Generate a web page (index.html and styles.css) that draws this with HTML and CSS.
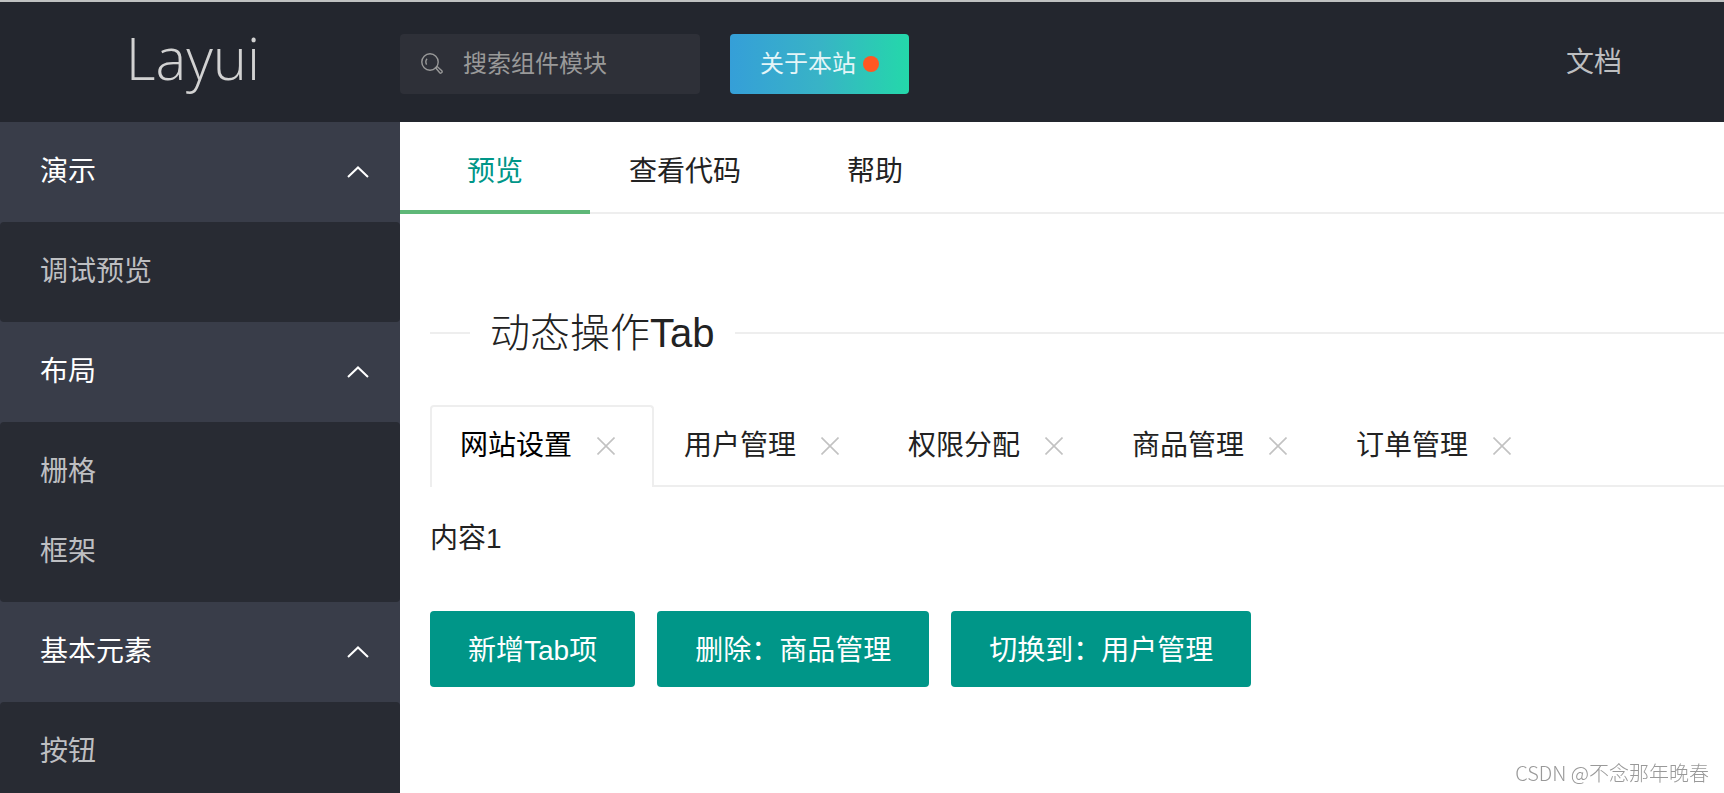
FILE: index.html
```html
<!DOCTYPE html>
<html lang="zh-CN">
<head>
<meta charset="utf-8">
<title>Layui</title>
<link rel="stylesheet" href="styles.css">
</head>
<body>
<header class="header">
  <a class="logo" href="#">Layui</a>
  <label class="search">
    <svg class="search-icon" viewBox="0 0 22 22" aria-hidden="true">
      <circle cx="9" cy="9" r="8.2"/>
      <path d="M5.6 11.6C4.5 9.6 4.6 7.5 6 5.8M14.6 14.8l1.6-1.2 4.6 4.2c1 1.2-.6 3-1.9 2.1z"/>
    </svg>
    <input class="search-input" type="text" placeholder="搜索组件模块" aria-label="搜索组件模块">
  </label>
  <a class="about" href="#">关于本站<span class="dot"></span></a>
  <nav class="header-nav"><a href="#">文档</a></nav>
</header>
<div class="body">
  <nav class="side">
    <button class="side-title" type="button">演示<svg class="chevron" viewBox="0 0 22 12" aria-hidden="true"><path d="M1 11 11 1.5 21 11"/></svg></button>
    <div class="side-group"><a href="#">调试预览</a></div>
    <button class="side-title" type="button">布局<svg class="chevron" viewBox="0 0 22 12" aria-hidden="true"><path d="M1 11 11 1.5 21 11"/></svg></button>
    <div class="side-group"><a href="#">栅格</a><a href="#">框架</a></div>
    <button class="side-title" type="button">基本元素<svg class="chevron" viewBox="0 0 22 12" aria-hidden="true"><path d="M1 11 11 1.5 21 11"/></svg></button>
    <div class="side-group"><a href="#">按钮</a></div>
  </nav>
  <main class="main">
    <div class="view-tabs">
      <button class="view-tab active" type="button">预览</button>
      <button class="view-tab" type="button">查看代码</button>
      <button class="view-tab" type="button">帮助</button>
    </div>
    <section class="content">
      <h1 class="section-title">动态操作Tab</h1>
      <div class="card-tabs">
        <div class="card-tab active"><span>网站设置</span><button class="close" type="button" aria-label="关闭"><svg viewBox="0 0 18 18"><path d="M.5.5l17 17M17.5.5l-17 17"/></svg></button></div>
        <div class="card-tab"><span>用户管理</span><button class="close" type="button" aria-label="关闭"><svg viewBox="0 0 18 18"><path d="M.5.5l17 17M17.5.5l-17 17"/></svg></button></div>
        <div class="card-tab"><span>权限分配</span><button class="close" type="button" aria-label="关闭"><svg viewBox="0 0 18 18"><path d="M.5.5l17 17M17.5.5l-17 17"/></svg></button></div>
        <div class="card-tab"><span>商品管理</span><button class="close" type="button" aria-label="关闭"><svg viewBox="0 0 18 18"><path d="M.5.5l17 17M17.5.5l-17 17"/></svg></button></div>
        <div class="card-tab"><span>订单管理</span><button class="close" type="button" aria-label="关闭"><svg viewBox="0 0 18 18"><path d="M.5.5l17 17M17.5.5l-17 17"/></svg></button></div>
      </div>
      <p class="panel">内容1</p>
      <div class="actions">
        <button class="btn" type="button">新增Tab项</button>
        <button class="btn" type="button">删除：商品管理</button>
        <button class="btn" type="button">切换到：用户管理</button>
      </div>
    </section>
  </main>
</div>
<div class="watermark">CSDN @不念那年晚春</div>
</body>
</html>
```
FILE: styles.css
```css
* { box-sizing: border-box; }

html, body { height: 100%; }

body {
  margin: 0;
  display: flex;
  flex-direction: column;
  overflow: hidden;
  background: #fff;
  color: #222;
  font: 400 28px/40px "Liberation Sans", "Noto Sans CJK SC", sans-serif;
}

a { color: inherit; text-decoration: none; }

button {
  margin: 0;
  padding: 0;
  border: 0;
  background: none;
  color: inherit;
  font: inherit;
  cursor: pointer;
}

.header {
  flex: none;
  display: flex;
  align-items: center;
  height: 122px;
  padding-top: 4px;
  padding-right: 102px;
  border-top: 2px solid #bfc1c1;
  background: #23262e;
}

.logo {
  width: 400px;
  padding: 0 14px 12px 0;
  color: #d2d2d2;
  font: 300 58px/80px "Open Sans", "Noto Sans", sans-serif;
  text-align: center;
}

.search {
  display: flex;
  align-items: center;
  gap: 20px;
  width: 300px;
  height: 60px;
  padding: 0 21px;
  border-radius: 4px;
  background: #2e3038;
}

.search-icon {
  flex: none;
  width: 22px;
  height: 22px;
  fill: none;
  stroke: #999;
  stroke-width: 1.4;
}

.search-input {
  flex: 1;
  min-width: 0;
  padding: 0;
  border: 0;
  outline: 0;
  background: none;
  color: #999;
  font: inherit;
  font-size: 24px;
}

.search-input::placeholder { color: #999; opacity: 1; }

.about {
  display: flex;
  align-items: center;
  gap: 7px;
  height: 60px;
  margin-left: 30px;
  padding: 0 30px;
  border-radius: 4px;
  background: linear-gradient(to right, #359fd8, #38b3c6 50%, #24d8aa);
  color: #e4f5f8;
  font-size: 24px;
}

.dot {
  width: 16px;
  height: 16px;
  border-radius: 50%;
  background: #ff5722;
}

.header-nav {
  margin-left: auto;
  padding-bottom: 2px;
  color: #bdbec0;
}

.body { flex: 1; display: flex; min-height: 0; }

.side {
  flex: none;
  width: 400px;
  overflow: hidden;
  background: #393d49;
}

.side-title {
  display: flex;
  align-items: center;
  justify-content: space-between;
  width: 100%;
  height: 100px;
  padding: 0 31px 0 40px;
  color: #fff;
}

.chevron {
  width: 22px;
  height: 12px;
  fill: none;
  stroke: #fff;
  stroke-width: 2;
}

.side-group {
  padding: 10px 0;
  border-radius: 4px;
  background: #282b33;
  color: #bebfc2;
}

.side-group a {
  display: block;
  padding: 0 40px;
  line-height: 80px;
}

.main { flex: 1; min-width: 0; overflow: hidden; }

.view-tabs {
  display: flex;
  height: 92px;
  border-bottom: 2px solid #eee;
}

.view-tab {
  min-width: 190px;
  height: 92px;
  padding: 12px 30px 0;
  border-bottom: 4px solid transparent;
}

.view-tab.active { border-color: #5fb878; color: #009688; }

.content { padding: 88px 0 0 30px; }

.section-title {
  display: flex;
  align-items: center;
  gap: 20px;
  margin: 0 0 41px;
  font-size: 40px;
  font-weight: 300;
  line-height: 62px;
}

.section-title::before,
.section-title::after {
  content: "";
  width: 40px;
  height: 2px;
  background: #eee;
}

.section-title::after { flex: 1; }

.card-tabs {
  display: flex;
  height: 82px;
  border-bottom: 2px solid #eee;
}

.card-tab {
  display: flex;
  align-items: center;
  gap: 16px;
  height: 82px;
  padding: 0 28px 2px;
  border: 2px solid transparent;
  border-bottom: 0;
}

.card-tab.active {
  border-color: #eee;
  border-radius: 4px 4px 0 0;
  background: #fff;
  color: #000;
}

.close {
  display: flex;
  align-items: center;
  justify-content: center;
  width: 36px;
  height: 36px;
}

.close svg {
  width: 18px;
  height: 18px;
  fill: none;
  stroke: #c2c2c2;
  stroke-width: 1.6;
}

.panel { margin: 0; padding: 32px 0 52px; }

.actions { display: flex; gap: 22px; }

.btn {
  height: 76px;
  padding: 4px 38px 0;
  border-radius: 4px;
  background: #009688;
  color: #fff;
}

.watermark {
  position: fixed;
  right: 15px;
  bottom: 0;
  color: #999;
  font: 300 20px/40px "Noto Sans CJK SC", sans-serif;
}
```
